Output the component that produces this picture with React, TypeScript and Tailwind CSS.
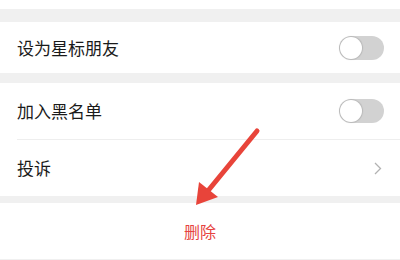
import React from "react";

function Toggle() {
  return (
    <div className="w-[45px] h-[24px] rounded-full bg-[#d2d2d2] p-[1px] flex items-center">
      <div className="w-[22px] h-[22px] rounded-full bg-white shadow-[0_0_1px_1px_rgba(0,0,0,0.12)]" />
    </div>
  );
}

function Chevron() {
  return (
    <svg width="8" height="13" viewBox="0 0 8 13" aria-hidden="true">
      <path d="M1 1l5.5 5.5L1 12" fill="none" stroke="#b2b2b2" strokeWidth="1.3" />
    </svg>
  );
}

export default function App() {
  return (
    <div
      className="relative w-[400px] h-[260px] overflow-hidden bg-[#f0f0f0] text-[#1a1a1a]"
      style={{ fontFamily: '"Noto Sans CJK SC", "Noto Sans", sans-serif' }}
    >
      <div className="h-[9px] bg-white" />
      <div className="h-[13px]" />
      <div className="h-[51px] bg-white flex items-center justify-between pl-[17px] pr-[16px]">
        <span className="text-[17px]">设为星标朋友</span>
        <Toggle />
      </div>
      <div className="h-[10px]" />
      <div className="bg-white">
        <div className="h-[56px] flex items-center justify-between pl-[17px] pr-[16px]">
          <span className="text-[17px]">加入黑名单</span>
          <Toggle />
        </div>
        <div className="ml-[17px] h-px bg-[#eeeeee]" />
        <div className="h-[56px] flex items-center justify-between pl-[17px] pr-[18px]">
          <span className="text-[17px]">投诉</span>
          <Chevron />
        </div>
      </div>
      <div className="h-[7px]" />
      <div className="h-[56px] bg-white flex items-center justify-center">
        <span className="text-[16px] text-[#e64340]">删除</span>
      </div>

      <svg
        className="absolute left-0 top-0 pointer-events-none"
        width="400"
        height="260"
        viewBox="0 0 400 260"
        aria-hidden="true"
      >
        <line x1="257" y1="131" x2="207" y2="192" stroke="#e8443a" strokeWidth="5" strokeLinecap="round" />
        <polygon points="196,205 199,182 218,197" fill="#e8443a" />
      </svg>
    </div>
  );
}
